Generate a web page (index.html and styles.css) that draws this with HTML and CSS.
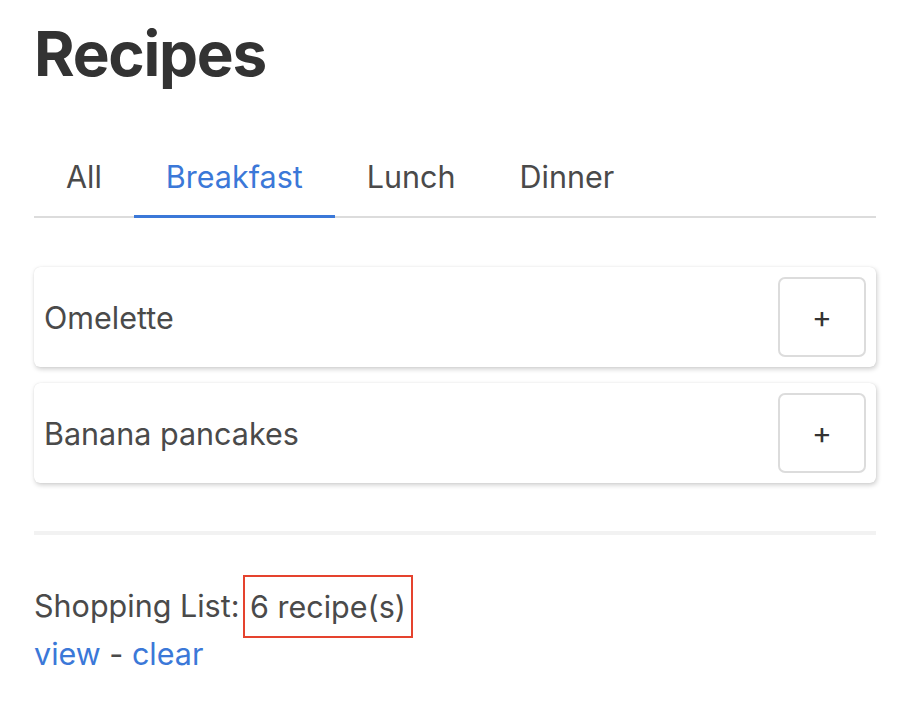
FILE: index.html
```html
<!DOCTYPE html>
<html>
<head>
<meta charset="utf-8">
<link rel="stylesheet" href="styles.css">
</head>
<body>
<div class="page">
  <h1 class="title">Recipes</h1>
  <nav class="tabs">
    <a class="tab">All</a>
    <a class="tab active">Breakfast</a>
    <a class="tab">Lunch</a>
    <a class="tab">Dinner</a>
  </nav>
  <div class="cards">
    <div class="card">
      <span class="card-name">Omelette</span>
      <button class="add-btn">+</button>
    </div>
    <div class="card">
      <span class="card-name">Banana pancakes</span>
      <button class="add-btn">+</button>
    </div>
  </div>
  <hr class="divider">
  <div class="shopping">
    <div class="shop-line">Shopping List: <span class="count">6 recipe(s)</span></div>
    <div class="shop-links"><a class="link">view</a> - <a class="link">clear</a></div>
  </div>
</div>
</body>
</html>
```
FILE: styles.css
```css
* { box-sizing: border-box; }
body {
  margin: 0;
  background: #fff;
  font-family: Inter, "Noto Sans", sans-serif;
  color: #4a4a4a;
}
.page {
  padding: 0 34px;
}
.title {
  margin: 0;
  padding-top: 18px;
  font-size: 62px;
  line-height: 72px;
  font-weight: 700;
  color: #333;
  letter-spacing: -1.3px;
}
.tabs {
  display: flex;
  margin-top: 50px;
  border-bottom: 2px solid #dcdcdc;
}
.tab {
  padding: 19px 32px 20px;
  font-size: 30.5px;
  line-height: 36px;
  color: #4a4a4a;
  margin-bottom: -2px;
  border-bottom: 3px solid transparent;
}
.tab.active {
  color: #3b78d8;
  border-bottom-color: #3b78d8;
}
.cards {
  display: flex;
  flex-direction: column;
  gap: 16px;
  margin-top: 49px;
}
.card {
  display: flex;
  align-items: center;
  justify-content: space-between;
  height: 100px;
  padding: 10px 10px 10px 10px;
  border-radius: 6px;
  background: #fff;
  box-shadow: 1px 2px 5px rgba(0,0,0,0.2), 0 0 1px rgba(0,0,0,0.12);
}
.card-name {
  font-size: 30.5px;
  color: #4a4a4a;
}
.add-btn {
  width: 88px;
  height: 80px;
  border: 2px solid #dcdcdc;
  border-radius: 7px;
  background: #fff;
  font-family: Inter, sans-serif;
  font-size: 30px;
  color: #333;
  padding: 0;
}
.divider {
  margin: 48px 0 0;
  border: none;
  border-top: 4px solid #f2f2f2;
}
.shopping {
  margin-top: 47px;
  font-size: 30.5px;
  line-height: 48px;
}
.count {
  display: inline-block;
  border: 2px solid #e5432e;
  padding: 0 5px;
  line-height: 59px;
  margin-left: -5px;
}
.shop-line {
  height: 48px;
  display: flex;
  align-items: center;
  white-space: pre;
}
.link {
  color: #3b78d8;
}
```
